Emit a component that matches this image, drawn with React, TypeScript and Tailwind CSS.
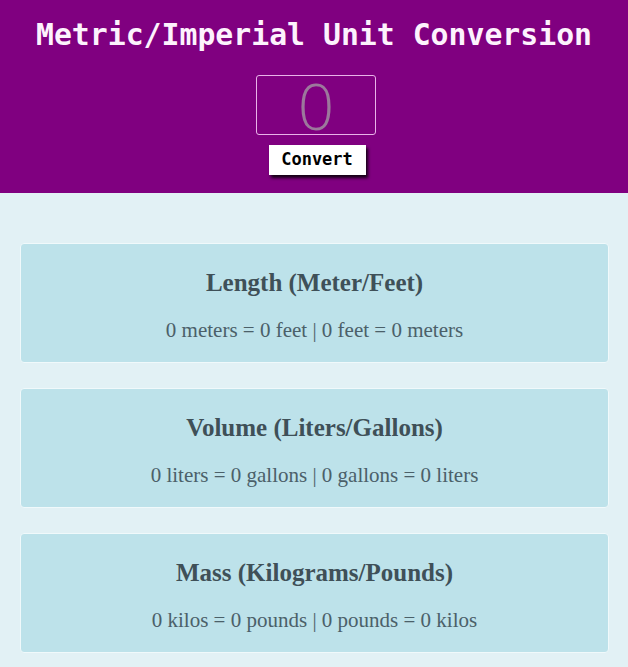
import React from "react";

const cards = [
  { title: "Length (Meter/Feet)", text: "0 meters = 0 feet | 0 feet = 0 meters" },
  { title: "Volume (Liters/Gallons)", text: "0 liters = 0 gallons | 0 gallons = 0 liters" },
  { title: "Mass (Kilograms/Pounds)", text: "0 kilos = 0 pounds | 0 pounds = 0 kilos" },
];

export default function App() {
  return (
    <div className="min-h-[667px] bg-[#e2f1f5]">
      <header className="h-[193px] bg-[#800080] flex flex-col items-center pt-[15px]">
        <h1 className="text-[29.8px] leading-[40px] font-bold text-[#fdf2fd] [font-family:'DejaVu_Sans_Mono',monospace]">
          Metric/Imperial Unit Conversion
        </h1>
        <input
          type="text"
          placeholder="0"
          className="mt-[20px] ml-[4px] w-[120px] h-[60px] p-0 bg-transparent border border-[#e9b3e9] rounded-[3px] text-center text-[64px] leading-none font-light text-white placeholder:text-[#9c789c] outline-none [font-family:'Open_Sans',sans-serif]"
        />
        <button className="mt-[10px] ml-[6px] h-[30px] w-[97px] bg-white text-black text-[17px] font-bold shadow-[2px_3px_3px_rgba(0,0,0,0.85)] [font-family:'DejaVu_Sans_Mono',monospace]">
          Convert
        </button>
      </header>
      <main className="pl-[20px] pr-[19px] pt-[50px] pb-[16px] flex flex-col gap-[25px]">
        {cards.map((c) => (
          <section
            key={c.title}
            className="h-[120px] rounded-[4px] border border-[#f0f9fb] bg-[#bde2ea] flex flex-col items-center pt-[23px] [font-family:'Liberation_Serif',serif]"
          >
            <h2 className="text-[25px] leading-[32px] font-bold text-[#3f5058]">{c.title}</h2>
            <p className="mt-[18px] text-[21px] leading-[26px] text-[#4b6069]">{c.text}</p>
          </section>
        ))}
      </main>
    </div>
  );
}
